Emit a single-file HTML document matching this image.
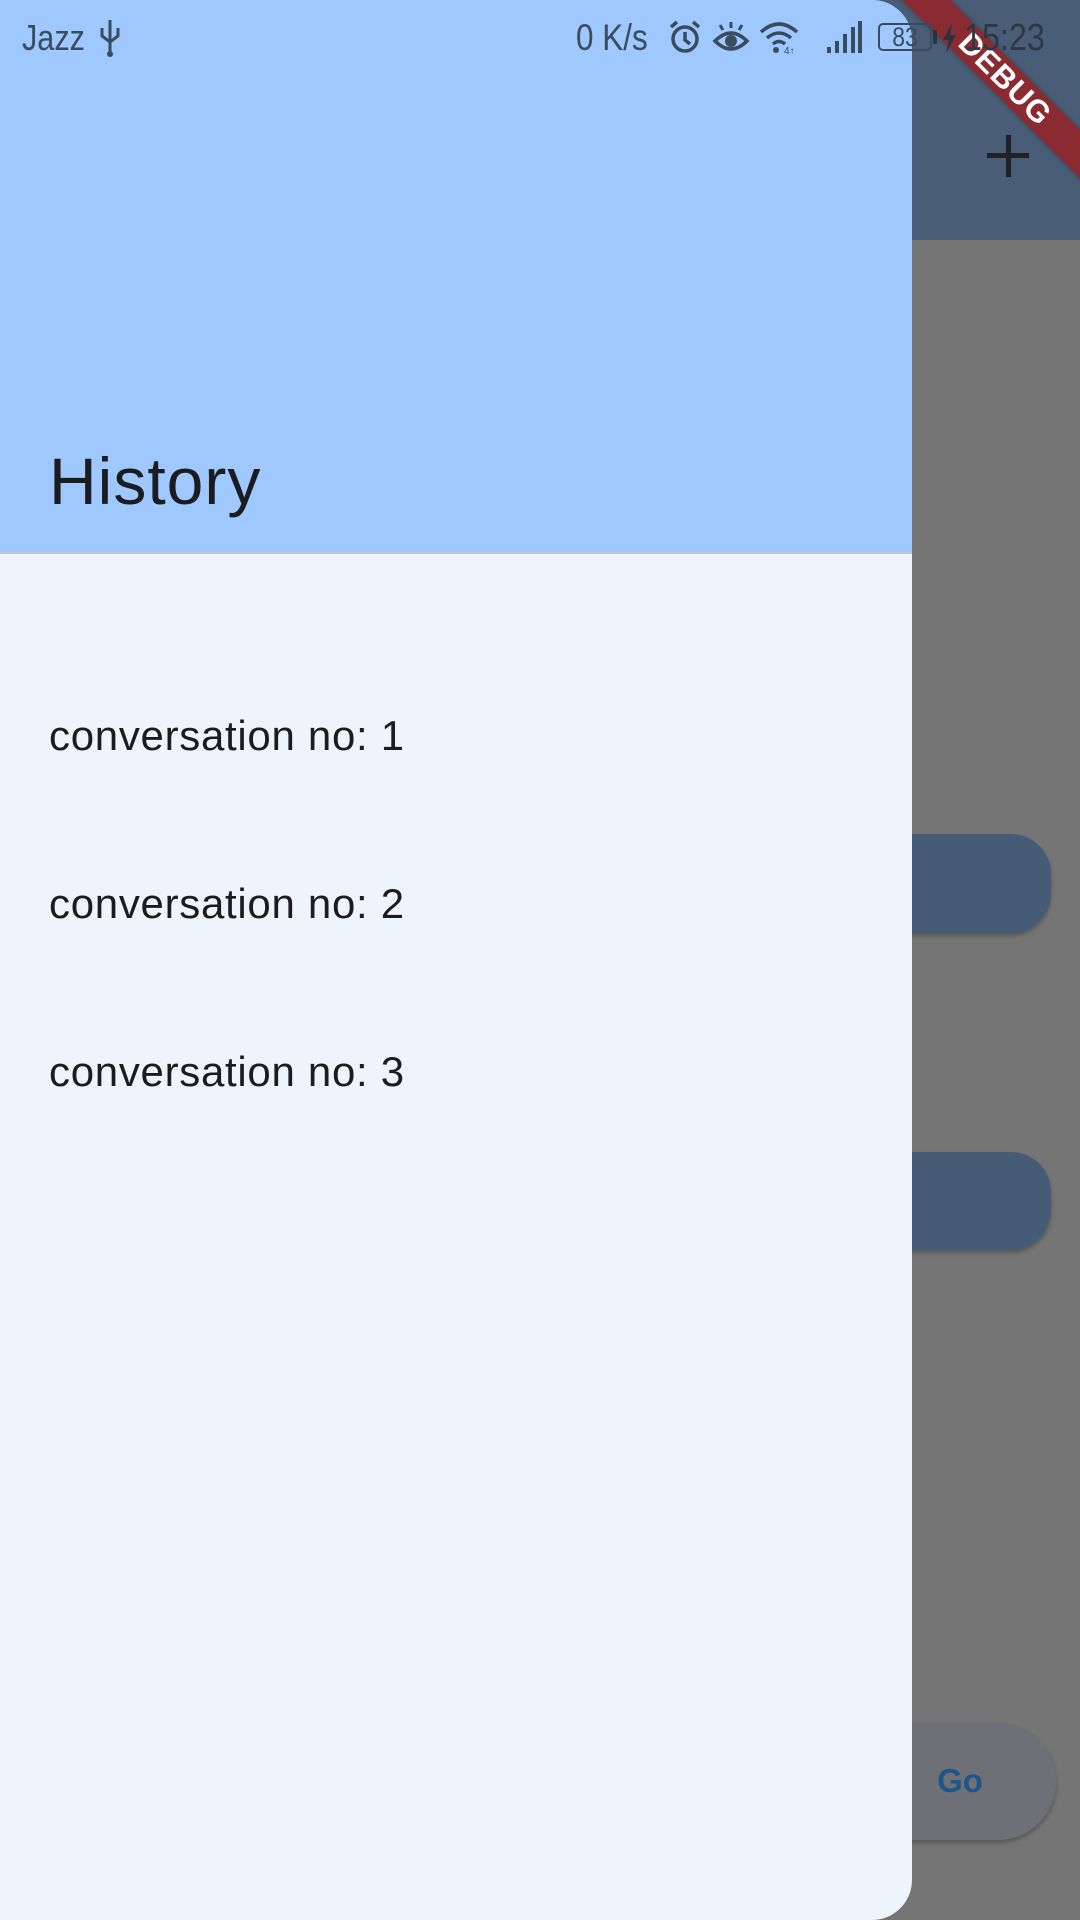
<!DOCTYPE html>
<html><head><meta charset="utf-8"><style>
*{margin:0;padding:0;box-sizing:border-box}
body{width:1080px;height:1920px;overflow:hidden;position:relative;background:#757575;font-family:"Liberation Sans",sans-serif}
.abs{position:absolute}
.cond{transform-origin:left top;transform:scaleX(.85)}
</style></head><body>
<!-- background app -->
<div class="abs" style="left:0;top:0;width:1080px;height:240px;background:#4a5d77"></div>
<div class="abs" style="left:987px;top:153px;width:42px;height:5px;background:#1e2227"></div>
<div class="abs" style="left:1005.5px;top:135px;width:5px;height:42px;background:#1e2227"></div>
<div class="abs" style="left:800px;top:834px;width:251px;height:99px;border-radius:40px;background:#465b75;box-shadow:0 3px 4px rgba(0,0,0,.25)"></div>
<div class="abs" style="left:800px;top:1152px;width:251px;height:98px;border-radius:40px;background:#465b75;box-shadow:0 3px 4px rgba(0,0,0,.25)"></div>
<div class="abs" style="left:780px;top:1723px;width:276px;height:117px;border-radius:58px;background:#6e7075;box-shadow:0 3px 4px rgba(0,0,0,.25)"></div>
<div class="abs" style="left:920px;top:1762px;width:80px;font-size:33px;font-weight:bold;color:#1f568a;text-align:center">Go</div>

<!-- drawer -->
<div class="abs" style="left:0;top:0;width:912px;height:1920px;background:#eff3fb;border-radius:0 40px 40px 0;overflow:hidden">
  <div class="abs" style="left:0;top:0;width:912px;height:552px;background:#9ec8fe"></div>
  <div class="abs" style="left:0;top:552px;width:912px;height:2px;background:#c2c8d2"></div>
  <div class="abs" style="left:49px;top:443px;font-size:66px;color:#1a1c20;line-height:76px;letter-spacing:1px">History</div>
  <div class="abs" style="left:49px;top:711px;font-size:42px;color:#1a1c20;letter-spacing:.7px;line-height:50px">conversation no: 1</div>
  <div class="abs" style="left:49px;top:879px;font-size:42px;color:#1a1c20;letter-spacing:.7px;line-height:50px">conversation no: 2</div>
  <div class="abs" style="left:49px;top:1047px;font-size:42px;color:#1a1c20;letter-spacing:.7px;line-height:50px">conversation no: 3</div>
</div>

<!-- debug banner -->
<div class="abs" style="left:805px;top:62px;width:400px;height:34px;background:#8a2a31;transform:rotate(45deg);color:#fff;font-weight:bold;font-size:31px;text-align:center;line-height:34px;letter-spacing:1px;box-shadow:0 0 6px rgba(0,0,0,.3)">DEBUG</div>

<!-- status bar -->
<div class="abs cond" style="left:22px;top:16px;font-size:36px;color:#3b4b5f;line-height:44px">Jazz</div>
<svg class="abs" style="left:98px;top:18px" width="24" height="40" viewBox="0 0 24 40"><path d="M12 2v34M4 10v8l8 6 8-6v-8" stroke="#3b4b5f" stroke-width="3" fill="none"/><circle cx="12" cy="36" r="3" fill="#3b4b5f"/></svg>
<div class="abs cond" style="left:576px;top:16px;font-size:37px;color:#3b4b5f;line-height:44px">0 K/s</div>
<svg class="abs" style="left:668px;top:20px" width="34" height="34" viewBox="0 0 34 34"><circle cx="17" cy="19" r="12" stroke="#3b4b5f" stroke-width="3.5" fill="none"/><path d="M17 12v8l5 4M3 7l6-5M31 7l-6-5" stroke="#3b4b5f" stroke-width="3.5" fill="none"/></svg>
<svg class="abs" style="left:712px;top:20px" width="38" height="34" viewBox="0 0 38 34"><path d="M3 21q16-16 32 0q-16 16-32 0z" stroke="#3b4b5f" stroke-width="3.5" fill="none"/><circle cx="19" cy="21" r="6" fill="#3b4b5f"/><path d="M19 2v6M8 5l3 5M30 5l-3 5" stroke="#3b4b5f" stroke-width="3"/></svg>
<svg class="abs" style="left:758px;top:20px" width="44" height="34" viewBox="0 0 44 34"><path d="M3 12q18-16 36 0M9 18q12-10 24 0M15 24q6-5 12 0" stroke="#3b4b5f" stroke-width="3.5" fill="none"/><circle cx="18" cy="30" r="3" fill="#3b4b5f"/><text x="26" y="34" font-size="10" fill="#3b4b5f" font-family="Liberation Sans">4↑</text></svg>
<svg class="abs" style="left:826px;top:20px" width="36" height="34" viewBox="0 0 36 34"><rect x="1" y="27" width="4" height="6" fill="#3b4b5f"/><rect x="9" y="21" width="4" height="12" fill="#3b4b5f"/><rect x="17" y="14" width="4" height="19" fill="#3b4b5f"/><rect x="25" y="7" width="4" height="26" fill="#3b4b5f"/><rect x="32" y="1" width="4" height="32" fill="#3b4b5f"/></svg>
<div class="abs" style="left:878px;top:23px;width:54px;height:28px;border:2px solid #3b4b5f;border-radius:5px;font-size:27px;color:#3b4b5f;line-height:24px;text-align:center"><span style="display:inline-block;transform:scaleX(.85)">83</span></div>
<div class="abs" style="left:933px;top:30px;width:4px;height:14px;background:#2a3340"></div>
<svg class="abs" style="left:941px;top:22px" width="16" height="32" viewBox="0 0 16 32"><path d="M11 1L2 18h6l-3 13 10-18H9z" fill="#2a3340"/></svg>
<div class="abs cond" style="left:964px;top:16px;font-size:38px;color:#2e3845;line-height:44px">15:23</div>
</body></html>
